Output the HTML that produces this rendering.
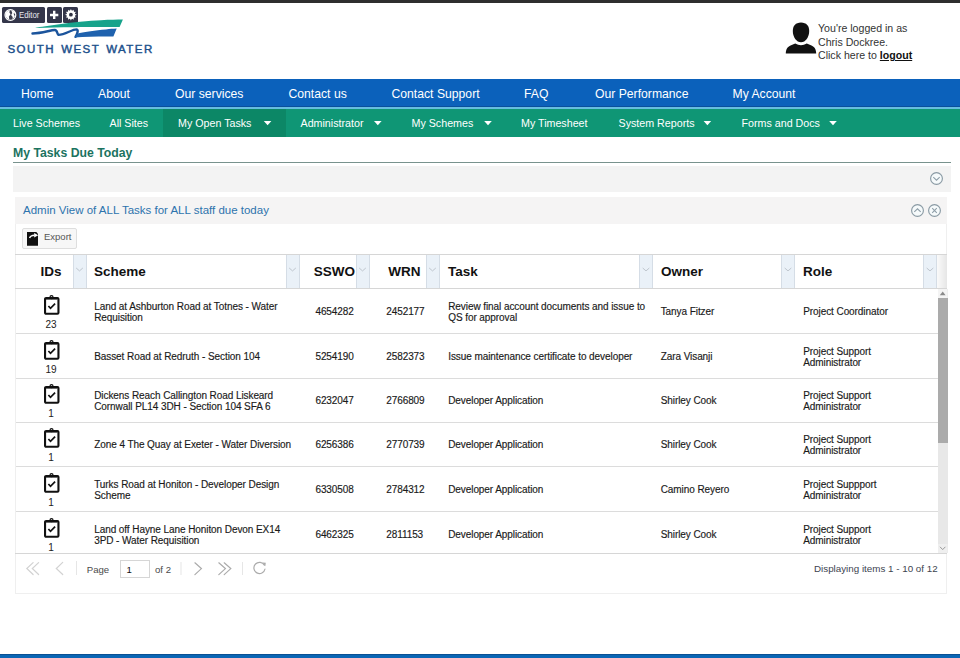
<!DOCTYPE html>
<html><head><meta charset="utf-8">
<style>
*{box-sizing:border-box}
html,body{margin:0;padding:0;width:960px;height:658px;overflow:hidden;background:#fff;font-family:"Liberation Sans",sans-serif;position:relative}
.abs{position:absolute}
#topbar{left:0;top:0;width:960px;height:3px;background:#2e2e2e}
.edbtn{background:#34364a;border-radius:1.5px;top:7px;height:15.5px}
#nav1{left:0;top:79px;width:960px;height:28px;background:#0b61bb;border-bottom:1px solid #0a4f9c}
#navline{left:0;top:107px;width:960px;height:2px;background:#66bde0}
#nav2{left:0;top:109px;width:960px;height:28px;background:#0f9675}
.n1{position:absolute;top:86.6px;color:#fff;font-size:12.2px;line-height:14px;white-space:nowrap}
.n2{position:absolute;top:117px;color:#fff;font-size:10.7px;line-height:13px;white-space:nowrap}
.arr{position:absolute;top:121px;width:0;height:0;border-left:3.75px solid transparent;border-right:3.75px solid transparent;border-top:4.2px solid #fff}
.hcell{position:absolute;top:255px;height:33px;font-size:13.5px;font-weight:bold;color:#111;line-height:33px;white-space:nowrap}
.mbtn{position:absolute;top:255px;height:33px;background:#eaf1f8;border-left:1px solid #d5dde6;border-right:1px solid #d5dde6}
.row{position:absolute;left:16px;width:922px;height:44.67px;border-bottom:1px solid #dcdcdc}
.t{position:absolute;font-size:10px;letter-spacing:-0.075px;line-height:11.2px;color:#1a1a1a;white-space:nowrap;-webkit-text-stroke:0.15px #1a1a1a}
</style></head><body>
<div class="abs" id="topbar"></div>
<!-- editor buttons -->
<div class="abs edbtn" style="left:2px;width:43px"></div>
<div class="abs edbtn" style="left:47px;width:14.8px"></div>
<div class="abs edbtn" style="left:63px;width:15px"></div>
<div class="abs" style="left:19.3px;top:9.6px;font-size:8.7px;line-height:11px;color:#e8e8ee;transform:scaleX(0.9);transform-origin:0 0">Editor</div>
<svg class="abs" style="left:0;top:4px" width="20" height="22" viewBox="0 4 20 22"><circle cx="10.4" cy="15" r="5.4" fill="#3a3c4c" stroke="#fff" stroke-width="1.2"/><path d="M5.6,13.2 C6.5,11.5 8,10.3 9.8,10.2 L9.4,12.6 L10.6,14.3 L8.9,16.6 L9.3,19.8 C7.5,19.2 6,17.6 5.4,15.6 Z" fill="#fff"/><path d="M11.2,10.3 C13.3,10.6 14.8,11.8 15.4,13.4 L13.5,13.6 L14.9,16.4 L12.5,19.6 L12.7,16.9 L11.1,15.1 L12.3,13 Z" fill="#fff"/></svg>
<svg class="abs" style="left:44px;top:4px" width="18" height="22" viewBox="44 4 18 22"><path d="M53,10.7 h2.4 v3.1 h2.9 v2.4 h-2.9 v2.9 h-2.4 v-2.9 h-3 v-2.4 h3 z" fill="#fff"/></svg>
<svg class="abs" style="left:60px;top:4px" width="22" height="22" viewBox="60 4 22 22"><polygon points="76.70,14.70 74.67,15.71 75.92,17.60 73.66,17.46 73.80,19.72 71.91,18.47 70.90,20.50 69.89,18.47 68.00,19.72 68.14,17.46 65.88,17.60 67.13,15.71 65.10,14.70 67.13,13.69 65.88,11.80 68.14,11.94 68.00,9.68 69.89,10.93 70.90,8.90 71.91,10.93 73.80,9.68 73.66,11.94 75.92,11.80 74.67,13.69" fill="#fff"/><circle cx="70.9" cy="14.7" r="4.1" fill="#fff"/><circle cx="70.9" cy="14.7" r="1.9" fill="#2f3142"/></svg>

<!-- logo -->
<svg class="abs" style="left:0;top:0" width="160" height="60" viewBox="0 0 160 60">
<path d="M34.8,28 C40,27 50,25.4 59.25,24.3 C67,23.2 74,22.3 80,21.7 C88,20.9 95,20.4 101,20.2 C110,19.8 117,19.7 122.9,19.6 L119.6,27 C100,26.9 70,26.9 34.8,28 Z" fill="#17a38b"/>
<path d="M32.5,33.5 C42,33.4 50,30.2 54.8,30 C57.5,29.9 57,34.2 58.5,34.9 C65,34.8 72,29.4 76.5,29.4 C79,29.4 77,34.5 75.5,36.8" fill="none" stroke="#1b549c" stroke-width="2.4" stroke-linecap="round"/>
<path d="M74.6,37.6 C75.5,35.5 76.5,33.8 78.5,33.2 C85,31.8 95,30.3 106,29.4 C110,29 113,28.7 116.7,28.5 L113.4,36.5 C100,36.4 86,36.6 74.6,37.6 Z" fill="#1f62ae"/>
</svg>
<div class="abs" style="left:7.4px;top:45.3px;font-size:11.5px;line-height:11px;letter-spacing:1.45px;word-spacing:1.6px;color:#1c508b;white-space:nowrap;-webkit-text-stroke:0.45px #1c508b;transform:scaleY(0.87);transform-origin:0 0">SOUTH WEST WATER</div>

<!-- user -->
<svg class="abs" style="left:780px;top:18px" width="40" height="40" viewBox="780 18 40 40"><path d="M801,22.5 C806.5,22.5 809.2,26 809.2,31 C809.2,37 805.5,42.3 801,42.3 C796.5,42.3 792.8,37 792.8,31 C792.8,26 795.5,22.5 801,22.5 Z" fill="#111"/><path d="M785.8,53.5 C786,50 786.8,47.2 790.5,45.6 L795.2,43.4 Q801,47 806.8,43.4 L811.5,45.6 C815.2,47.2 816,50 816.2,53.5 Z" fill="#111"/></svg>
<div class="abs" style="left:818px;top:22px;font-size:10.6px;line-height:13.6px;color:#333;white-space:nowrap">You're logged in as<br>Chris Dockree.<br>Click here to <b style="color:#111;text-decoration:underline">logout</b></div>

<!-- nav -->
<div class="abs" id="nav1"></div>
<div class="abs" id="navline"></div>
<div class="abs" id="nav2"></div>
<div class="abs" style="left:163px;top:109px;width:123px;height:28px;background:#0c8766"></div>
<span class="n1" style="left:21px">Home</span>
<span class="n1" style="left:98px">About</span>
<span class="n1" style="left:175px">Our services</span>
<span class="n1" style="left:288.5px">Contact us</span>
<span class="n1" style="left:391.5px">Contact Support</span>
<span class="n1" style="left:524px">FAQ</span>
<span class="n1" style="left:595px">Our Performance</span>
<span class="n1" style="left:732.5px">My Account</span>

<span class="n2" style="left:13px">Live Schemes</span>
<span class="n2" style="left:109.5px">All Sites</span>
<span class="n2" style="left:178px">My Open Tasks</span>
<span class="n2" style="left:300.5px">Administrator</span>
<span class="n2" style="left:411.5px">My Schemes</span>
<span class="n2" style="left:521px">My Timesheet</span>
<span class="n2" style="left:618.5px">System Reports</span>
<span class="n2" style="left:741.5px">Forms and Docs</span>

<svg class="abs" style="left:0;top:110px" width="960" height="25" viewBox="0 110 960 25"><path d="M263.8,121 L271.4,121 L267.6,125.3 Z" fill="#fff"/><path d="M374.0,121 L381.6,121 L377.8,125.3 Z" fill="#fff"/><path d="M484.2,121 L491.8,121 L488.0,125.3 Z" fill="#fff"/><path d="M703.6,121 L711.2,121 L707.4,125.3 Z" fill="#fff"/><path d="M829.2,121 L836.8,121 L833.0,125.3 Z" fill="#fff"/></svg>
<!-- heading -->
<div class="abs" style="left:13px;top:146.4px;font-size:12.25px;font-weight:bold;color:#1b735f;line-height:14px;white-space:nowrap">My Tasks Due Today</div>
<div class="abs" style="left:13px;top:162px;width:938px;height:1px;background:#78928d"></div>
<div class="abs" style="left:13px;top:166px;width:938px;height:26px;background:#f3f3f3"></div>
<svg class="abs" style="left:929px;top:171px" width="15" height="15" viewBox="0 0 15 15"><circle cx="7.5" cy="7.5" r="5.9" fill="#f6fafb" stroke="#8a9aa4" stroke-width="1.15"/><path d="M4.3 6.2 L7.5 9.2 L10.7 6.2" fill="none" stroke="#8e9ea8" stroke-width="1.05"/></svg>

<!-- panel 2 -->
<div class="abs" style="left:15px;top:197px;width:932px;height:397px;border:1px solid #efefef;border-top:none;background:#fff"></div>
<div class="abs" style="left:15px;top:197px;width:932px;height:26.5px;background:#f5f4f4"></div>
<div class="abs" style="left:23px;top:203px;font-size:11.5px;color:#2d73ad;line-height:14px;white-space:nowrap">Admin View of ALL Tasks for ALL staff due today</div>
<svg class="abs" style="left:910px;top:203px" width="15" height="15" viewBox="0 0 15 15"><circle cx="7.5" cy="7.5" r="5.9" fill="#f6fafb" stroke="#8a9aa4" stroke-width="1.15"/><path d="M4.3 8.9 L7.5 5.8 L10.7 8.9" fill="none" stroke="#8e9ea8" stroke-width="1.05"/></svg>
<svg class="abs" style="left:927px;top:203px" width="15" height="15" viewBox="0 0 15 15"><circle cx="7.5" cy="7.5" r="5.9" fill="#f6fafb" stroke="#8a9aa4" stroke-width="1.15"/><path d="M5.2 5.2 L9.8 9.8 M9.8 5.2 L5.2 9.8" fill="none" stroke="#8e9ea8" stroke-width="1.05"/></svg>

<!-- export -->
<div class="abs" style="left:22px;top:228px;width:55px;height:21px;border:1px solid #dedede;border-radius:2px;background:#f7f7f7"></div>
<svg class="abs" style="left:27px;top:231px" width="13" height="16" viewBox="0 0 13 16"><path d="M0,1 H9.3 L11,2.7 V14.8 H0 Z" fill="#111"/><path d="M2.6,7 Q3.4,4.3 7.6,4.2" fill="none" stroke="#fff" stroke-width="1.5"/><path d="M7.2,2 L11.2,4.2 L7.2,6.4 Z" fill="#fff"/></svg>
<div class="abs" style="left:44px;top:231px;font-size:9.5px;color:#555;line-height:12px">Export</div>

<!-- grid -->
<div class="abs" style="left:15px;top:254px;width:932px;height:1px;background:#d6d6d6"></div>
<div class="abs" style="left:15px;top:288px;width:932px;height:1px;background:#d6d6d6"></div>
<div class="abs" style="left:15px;top:553px;width:932px;height:1px;background:#d6d6d6"></div>

<div class="mbtn" style="left:72.5px;width:14px"></div>
<div class="mbtn" style="left:285.5px;width:14px"></div>
<div class="mbtn" style="left:355.5px;width:14px"></div>
<div class="mbtn" style="left:425.5px;width:14px"></div>
<div class="mbtn" style="left:639px;width:14px"></div>
<div class="mbtn" style="left:781px;width:14px"></div>
<div class="mbtn" style="left:923px;width:14px"></div>
<div class="abs" style="left:937px;top:255px;width:10px;height:33px;background:linear-gradient(90deg,#fafafa,#e6e6e6)"></div>

<svg class="abs" style="left:0;top:250px" width="960" height="40" viewBox="0 250 960 40"><path d="M76.2,268 L79.5,270.9 L82.8,268" fill="none" stroke="#bfc6ce" stroke-width="1"/><path d="M289.2,268 L292.5,270.9 L295.8,268" fill="none" stroke="#bfc6ce" stroke-width="1"/><path d="M359.2,268 L362.5,270.9 L365.8,268" fill="none" stroke="#bfc6ce" stroke-width="1"/><path d="M429.2,268 L432.5,270.9 L435.8,268" fill="none" stroke="#bfc6ce" stroke-width="1"/><path d="M642.7,268 L646,270.9 L649.3,268" fill="none" stroke="#bfc6ce" stroke-width="1"/><path d="M784.7,268 L788,270.9 L791.3,268" fill="none" stroke="#bfc6ce" stroke-width="1"/><path d="M926.7,268 L930,270.9 L933.3,268" fill="none" stroke="#bfc6ce" stroke-width="1"/></svg>
<div class="hcell" style="left:40.5px">IDs</div>
<div class="hcell" style="left:94px">Scheme</div>
<div class="hcell" style="left:255px;width:100px;text-align:right">SSWO</div>
<div class="hcell" style="left:320.5px;width:100px;text-align:right">WRN</div>
<div class="hcell" style="left:448px">Task</div>
<div class="hcell" style="left:661px">Owner</div>
<div class="hcell" style="left:803px">Role</div>

<!-- scrollbar -->
<div class="abs" style="left:938px;top:289px;width:9.5px;height:264px;background:#e8e8e8"></div>
<div class="abs" style="left:938px;top:298px;width:9.5px;height:145px;background:#ababab"></div>

<svg class="abs" style="left:936px;top:286px" width="14" height="270" viewBox="936 286 14 270">
<rect x="938" y="289" width="9.5" height="9" fill="#f4f4f4"/><path d="M939.8,295.2 L942.7,291.6 L945.6,295.2 Z" fill="#8a8a8a"/>
<rect x="938" y="544" width="9.5" height="9" fill="#efefef"/><path d="M940,546.8 L942.7,549.6 L945.4,546.8" fill="none" stroke="#999" stroke-width="1"/>
</svg>
<!--ROWS--><div class="abs" style="left:0;top:289px;width:938px;height:264px;overflow:hidden">
<div style="position:absolute;left:16px;top:44px;width:922px;height:1px;background:#dcdcdc"></div>
<div style="position:absolute;left:43.9px;top:5.80px;width:16px;height:20px"><svg width="16" height="20" viewBox="0 0 16 20"><rect x="1.05" y="2.95" width="13.4" height="15.8" rx="1" fill="none" stroke="#111" stroke-width="2.1"/><rect x="2" y="2.7" width="11.5" height="1.9" fill="#111"/><circle cx="7.5" cy="2.2" r="1.5" fill="none" stroke="#111" stroke-width="1.25"/><path d="M4.4 11 L6.5 13.3 L11.1 8.6" stroke="#111" stroke-width="1.7" fill="none"/></svg></div>
<div class="t" style="left:16px;width:70px;text-align:center;top:29.90px;font-size:10px;-webkit-text-stroke:0;color:#222">23</div>
<div class="t" style="left:94.2px;top:11.70px">Land at Ashburton Road at Totnes - Water<br>Requisition</div>
<div class="t" style="left:315.4px;top:16.60px">4654282</div>
<div class="t" style="left:386.2px;top:16.60px">2452177</div>
<div class="t" style="left:448.2px;top:11.70px">Review final account documents and issue to<br>QS for approval</div>
<div class="t" style="left:660.7px;top:16.60px">Tanya Fitzer</div>
<div class="t" style="left:803.2px;top:16.60px">Project Coordinator</div>
<div style="position:absolute;left:16px;top:89px;width:922px;height:1px;background:#dcdcdc"></div>
<div style="position:absolute;left:43.9px;top:50.80px;width:16px;height:20px"><svg width="16" height="20" viewBox="0 0 16 20"><rect x="1.05" y="2.95" width="13.4" height="15.8" rx="1" fill="none" stroke="#111" stroke-width="2.1"/><rect x="2" y="2.7" width="11.5" height="1.9" fill="#111"/><circle cx="7.5" cy="2.2" r="1.5" fill="none" stroke="#111" stroke-width="1.25"/><path d="M4.4 11 L6.5 13.3 L11.1 8.6" stroke="#111" stroke-width="1.7" fill="none"/></svg></div>
<div class="t" style="left:16px;width:70px;text-align:center;top:74.90px;font-size:10px;-webkit-text-stroke:0;color:#222">19</div>
<div class="t" style="left:94.2px;top:61.60px">Basset Road at Redruth - Section 104</div>
<div class="t" style="left:315.4px;top:61.60px">5254190</div>
<div class="t" style="left:386.2px;top:61.60px">2582373</div>
<div class="t" style="left:448.2px;top:61.60px">Issue maintenance certificate to developer</div>
<div class="t" style="left:660.7px;top:61.60px">Zara Visanji</div>
<div class="t" style="left:803.2px;top:56.70px">Project Support<br>Administrator</div>
<div style="position:absolute;left:16px;top:133px;width:922px;height:1px;background:#dcdcdc"></div>
<div style="position:absolute;left:43.9px;top:95.05px;width:16px;height:20px"><svg width="16" height="20" viewBox="0 0 16 20"><rect x="1.05" y="2.95" width="13.4" height="15.8" rx="1" fill="none" stroke="#111" stroke-width="2.1"/><rect x="2" y="2.7" width="11.5" height="1.9" fill="#111"/><circle cx="7.5" cy="2.2" r="1.5" fill="none" stroke="#111" stroke-width="1.25"/><path d="M4.4 11 L6.5 13.3 L11.1 8.6" stroke="#111" stroke-width="1.7" fill="none"/></svg></div>
<div class="t" style="left:16px;width:70px;text-align:center;top:119.15px;font-size:10px;-webkit-text-stroke:0;color:#222">1</div>
<div class="t" style="left:94.2px;top:100.95px">Dickens Reach Callington Road Liskeard<br>Cornwall PL14 3DH - Section 104 SFA 6</div>
<div class="t" style="left:315.4px;top:105.85px">6232047</div>
<div class="t" style="left:386.2px;top:105.85px">2766809</div>
<div class="t" style="left:448.2px;top:105.85px">Developer Application</div>
<div class="t" style="left:660.7px;top:105.85px">Shirley Cook</div>
<div class="t" style="left:803.2px;top:100.95px">Project Support<br>Administrator</div>
<div style="position:absolute;left:16px;top:177px;width:922px;height:1px;background:#dcdcdc"></div>
<div style="position:absolute;left:43.9px;top:139.25px;width:16px;height:20px"><svg width="16" height="20" viewBox="0 0 16 20"><rect x="1.05" y="2.95" width="13.4" height="15.8" rx="1" fill="none" stroke="#111" stroke-width="2.1"/><rect x="2" y="2.7" width="11.5" height="1.9" fill="#111"/><circle cx="7.5" cy="2.2" r="1.5" fill="none" stroke="#111" stroke-width="1.25"/><path d="M4.4 11 L6.5 13.3 L11.1 8.6" stroke="#111" stroke-width="1.7" fill="none"/></svg></div>
<div class="t" style="left:16px;width:70px;text-align:center;top:163.35px;font-size:10px;-webkit-text-stroke:0;color:#222">1</div>
<div class="t" style="left:94.2px;top:150.05px">Zone 4 The Quay at Exeter - Water Diversion</div>
<div class="t" style="left:315.4px;top:150.05px">6256386</div>
<div class="t" style="left:386.2px;top:150.05px">2770739</div>
<div class="t" style="left:448.2px;top:150.05px">Developer Application</div>
<div class="t" style="left:660.7px;top:150.05px">Shirley Cook</div>
<div class="t" style="left:803.2px;top:145.15px">Project Support<br>Administrator</div>
<div style="position:absolute;left:16px;top:222px;width:922px;height:1px;background:#dcdcdc"></div>
<div style="position:absolute;left:43.9px;top:184.00px;width:16px;height:20px"><svg width="16" height="20" viewBox="0 0 16 20"><rect x="1.05" y="2.95" width="13.4" height="15.8" rx="1" fill="none" stroke="#111" stroke-width="2.1"/><rect x="2" y="2.7" width="11.5" height="1.9" fill="#111"/><circle cx="7.5" cy="2.2" r="1.5" fill="none" stroke="#111" stroke-width="1.25"/><path d="M4.4 11 L6.5 13.3 L11.1 8.6" stroke="#111" stroke-width="1.7" fill="none"/></svg></div>
<div class="t" style="left:16px;width:70px;text-align:center;top:208.10px;font-size:10px;-webkit-text-stroke:0;color:#222">1</div>
<div class="t" style="left:94.2px;top:189.90px">Turks Road at Honiton - Developer Design<br>Scheme</div>
<div class="t" style="left:315.4px;top:194.80px">6330508</div>
<div class="t" style="left:386.2px;top:194.80px">2784312</div>
<div class="t" style="left:448.2px;top:194.80px">Developer Application</div>
<div class="t" style="left:660.7px;top:194.80px">Camino Reyero</div>
<div class="t" style="left:803.2px;top:189.90px">Project Suppport<br>Administrator</div>
<div style="position:absolute;left:43.9px;top:228.90px;width:16px;height:20px"><svg width="16" height="20" viewBox="0 0 16 20"><rect x="1.05" y="2.95" width="13.4" height="15.8" rx="1" fill="none" stroke="#111" stroke-width="2.1"/><rect x="2" y="2.7" width="11.5" height="1.9" fill="#111"/><circle cx="7.5" cy="2.2" r="1.5" fill="none" stroke="#111" stroke-width="1.25"/><path d="M4.4 11 L6.5 13.3 L11.1 8.6" stroke="#111" stroke-width="1.7" fill="none"/></svg></div>
<div class="t" style="left:16px;width:70px;text-align:center;top:253.00px;font-size:10px;-webkit-text-stroke:0;color:#222">1</div>
<div class="t" style="left:94.2px;top:234.80px">Land off Hayne Lane Honiton Devon EX14<br>3PD - Water Requisition</div>
<div class="t" style="left:315.4px;top:239.70px">6462325</div>
<div class="t" style="left:386.2px;top:239.70px">2811153</div>
<div class="t" style="left:448.2px;top:239.70px">Developer Application</div>
<div class="t" style="left:660.7px;top:239.70px">Shirley Cook</div>
<div class="t" style="left:803.2px;top:234.80px">Project Support<br>Administrator</div>
</div><!--/ROWS-->

<!-- pager -->
<svg class="abs" style="left:0;top:555px" width="960" height="30" viewBox="0 555 960 30">
<g fill="none" stroke-width="1.2" stroke-linecap="round">
<path d="M33.1,562.6 L26.8,568.5 L33.1,574.5 M38.6,562.6 L32.3,568.5 L38.6,574.5" stroke="#d2d2d2"/>
<path d="M62.7,562.4 L56.3,568.5 L62.7,574.5" stroke="#d2d2d2"/>
<path d="M194.9,562.8 L201.4,568.6 L194.9,574.6" stroke="#ababab"/>
<path d="M218.8,562.8 L225.4,568.6 L218.8,574.6 M224.2,562.8 L230.8,568.6 L224.2,574.6" stroke="#ababab"/>
<path d="M264.4,565.2 A5.6,5.6 0 1 0 265,569" stroke="#ababab"/>
</g>
<path d="M262.5,562.5 L265.8,562.8 L265.3,566.3 Z" fill="#ababab"/>
<g fill="#e6e6e6"><rect x="76" y="561" width="1" height="14"/><rect x="180.5" y="562" width="1" height="13"/><rect x="242" y="562" width="1" height="13"/></g>
</svg>

<div class="abs" style="left:86.8px;top:563.6px;font-size:9.6px;color:#4a4a4a;line-height:12px">Page</div>
<div class="abs" style="left:120.4px;top:559.8px;width:29.8px;height:17.8px;border:1px solid #d6d6d6;background:#fff"></div>
<div class="abs" style="left:126.6px;top:563.8px;font-size:9.6px;color:#111;line-height:12px">1</div>
<div class="abs" style="left:155px;top:563.6px;font-size:9.6px;color:#4a4a4a;line-height:12px">of 2</div>
<div class="abs" style="left:814px;top:563px;font-size:9.8px;color:#3d4450;line-height:12px;white-space:nowrap">Displaying items 1 - 10 of 12</div>

<div class="abs" style="left:0;top:653.5px;width:960px;height:1.5px;background:#0a5193"></div><div class="abs" style="left:0;top:655px;width:960px;height:3px;background:#0a66b5"></div>
</body></html>
